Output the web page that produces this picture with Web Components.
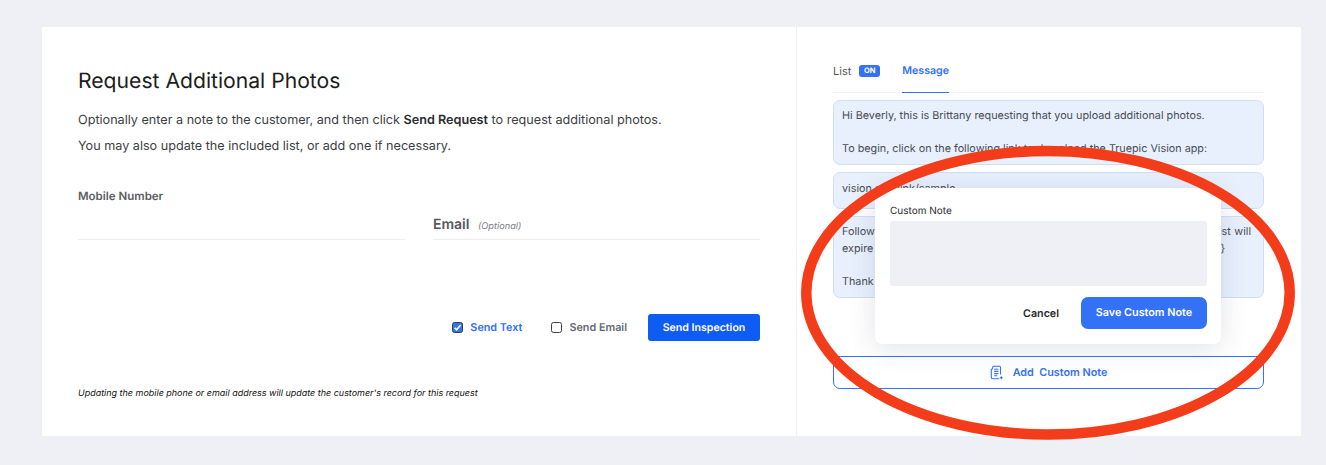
<!DOCTYPE html>
<html><head><meta charset="utf-8"><style>
html,body{margin:0;padding:0}
body{background:#eef0f5;font-family:Inter,"Liberation Sans",sans-serif;width:1326px;height:465px;overflow:hidden;text-rendering:geometricPrecision}
</style></head><body>
<request-page></request-page>
<script>
function def(name, html){
  customElements.define(name, class extends HTMLElement{
    constructor(){super();this.attachShadow({mode:'open'}).innerHTML=html;}
  });
}
def('form-field',`<style>
:host{display:flex;flex-direction:column;justify-content:flex-end;width:327px;height:50px;border-bottom:1px solid #eceef1;box-sizing:border-box}
</style><slot></slot>`);
def('send-option',`<style>
:host{display:inline-flex;align-items:center;gap:7px;font-size:10.8px;font-weight:600;color:#666a75}
:host([checked]){color:#3371f7}
.b{width:11px;height:11px;box-sizing:border-box;border:1px solid #3a3d45;border-radius:2.5px;background:#fff;display:flex;align-items:center;justify-content:center}
:host([checked]) .b{background:#3371f7}
svg{display:none}
:host([checked]) svg{display:block}
</style><span class="b"><svg width="9" height="9" viewBox="0 0 9 9"><path d="M1.6 4.7 3.6 6.8 7.6 2" fill="none" stroke="#fff" stroke-width="1.6"/></svg></span><slot></slot>`);
def('left-pane',`<style>
:host{display:flex;flex-direction:column;box-sizing:border-box;width:755px;height:409px;padding:43px 36px 0;border-right:1px solid #f0f1f4}
h1{margin:0;font-size:21.15px;line-height:24px;font-weight:400;color:#1c1d20}
p{margin:0;font-size:12.63px;line-height:16px;color:#3c3e44}
p.a{margin-top:19px}p.b{margin-top:10px}
b{font-weight:600;color:#2b2c30}
.fields{display:flex;gap:28px;margin-top:35px;height:50px}
.m{font-size:11.5px;font-weight:600;color:#5b5d63;line-height:14px;align-self:flex-start;margin-bottom:36px;white-space:nowrap}
.e{font-size:14px;font-weight:600;color:#55575d;line-height:17px;margin-bottom:4px;white-space:nowrap}
.e i{font-size:9.2px;font-weight:400;color:#7b7e87;margin-left:5px;font-style:italic}
.acts{display:flex;align-items:center;justify-content:flex-end;margin-top:74px;height:27px}
send-option+send-option{margin-left:29px}
button{all:unset;box-sizing:border-box;width:112px;height:27px;margin-left:21px;background:#0f5cf5;border-radius:3px;color:#fff;font-size:10.6px;font-weight:600;text-align:center;line-height:27px}
.note{margin-top:47px;font-size:8.97px;line-height:12px;font-style:italic;color:#111}
</style>
<h1>Request Additional Photos</h1>
<p class="a">Optionally enter a note to the customer, and then click <b>Send Request</b> to request additional photos.</p>
<p class="b">You may also update the included list, or add one if necessary.</p>
<div class="fields">
<form-field><span class="m">Mobile Number</span></form-field>
<form-field><span class="e">Email <i>(Optional)</i></span></form-field>
</div>
<div class="acts"><send-option checked>Send Text</send-option><send-option>Send Email</send-option><button>Send Inspection</button></div>
<div class="note">Updating the mobile phone or email address will update the customer's record for this request</div>`);
def('msg-box',`<style>
:host{display:block;box-sizing:border-box;background:#e8f0fe;border:1px solid #cfdffa;border-radius:7px;padding:7px 8px 7px;font-size:10.8px;line-height:16.5px;color:#4a4d55}
</style><slot></slot>`);
def('custom-note-popup',`<style>
:host{position:absolute;left:78px;top:161px;width:346px;height:156px;box-sizing:border-box;background:#fff;border-radius:7px;padding:17px 14px 15px 15px;box-shadow:0 4px 28px rgba(40,50,80,.14);display:flex;flex-direction:column}
label{font-size:10px;line-height:13px;color:#2a2b2f}
.t{height:65px;margin-top:3px;background:#eef0f5;border-radius:3px}
.r{display:flex;align-items:center;justify-content:flex-end;margin-top:11px}
.c{font-size:10.7px;font-weight:600;color:#26272b;margin-right:22px}
.s{all:unset;box-sizing:border-box;width:126px;height:32px;background:#3371f7;border-radius:7px;color:#fff;font-size:10.8px;font-weight:600;text-align:center;line-height:30px}
</style><label>Custom Note</label><div class="t"></div><div class="r"><span class="c">Cancel</span><button class="s">Save Custom Note</button></div>`);
def('right-pane',`<style>
:host{display:block;position:relative;box-sizing:border-box;width:504px;height:409px;padding:27px 37px 0 36px}
.tabs{display:flex;height:39px;border-bottom:1px solid #f2f3f6;font-size:11px;box-sizing:border-box;gap:22px}
.tab{display:flex;align-items:center;height:39px;box-sizing:border-box;padding-bottom:5px;color:#55575e;line-height:14px}
.tab.on{color:#3371f7;font-weight:600;border-bottom:1px solid #3371f7;font-size:10.6px;padding-bottom:4px}
.badge{margin-left:8px;width:21px;height:12px;border-radius:3px;background:#3371f7;color:#fff;font-size:7.5px;font-weight:700;text-align:center;line-height:12px}
.msgs{display:flex;flex-direction:column;gap:7px;margin-top:7px}
msg-box:nth-child(1){height:65px}
msg-box:nth-child(2){height:37px;padding-top:8px}
msg-box:nth-child(3){height:82px}
.l{text-align-last:justify;white-space:nowrap}
.add{display:flex;align-items:center;justify-content:center;gap:9px;box-sizing:border-box;height:33px;margin-top:58px;border:1px solid #3371f7;border-radius:7px;color:#3371f7;font-size:10.8px;font-weight:600;white-space:pre}
</style>
<div class="tabs"><div class="tab">List<span class="badge">ON</span></div><div class="tab on">Message</div></div>
<div class="msgs">
<msg-box>Hi Beverly, this is Brittany requesting that you upload additional photos.<br><br>To begin, click on the following link to download the Truepic Vision app:</msg-box>
<msg-box>vision.app.link/sample</msg-box>
<msg-box><div class="l" style="width:409px">Follow the instructions in the app to complete your full upload. This request will</div><div class="l" style="width:383px">expire in 24 hours. Please use the code provided to you: {{ code }</div><br>Thank you</msg-box>
</div>
<div class="add"><svg width="14" height="15" viewBox="0 0 14 15" fill="none" stroke="#3371f7" stroke-width="1.1"><path d="M4 1.2h5.5a1 1 0 0 1 1 1V9.5M4 1.2a1.3 1.3 0 0 0-1.3 1.3V3.5M2.7 3.5 1.3 4.6V12.2a1.5 1.5 0 0 0 1.5 1.5H9.2"/><path d="M4.2 4.2h4.2M4.2 6.4h4.2M4.2 8.6h4.2M4.2 10.8h3"/><path d="M11.3 11.2v3M9.8 12.7h3"/></svg><span>Add  Custom Note</span></div>
<custom-note-popup></custom-note-popup>`);
def('request-page',`<style>
:host{display:block;position:relative;width:1326px;height:465px;box-sizing:border-box;padding:27px 25px 29px 42px}
.card{display:flex;width:1259px;height:409px;background:#fff}
svg{position:absolute;left:0;top:0;pointer-events:none}
</style>
<div class="card"><left-pane></left-pane><right-pane></right-pane></div>
<svg width="1326" height="465"><ellipse cx="1048" cy="292.75" rx="241.7" ry="141.75" fill="none" stroke="#f33c19" stroke-width="10.5"/></svg>`);
</script>
</body></html>
